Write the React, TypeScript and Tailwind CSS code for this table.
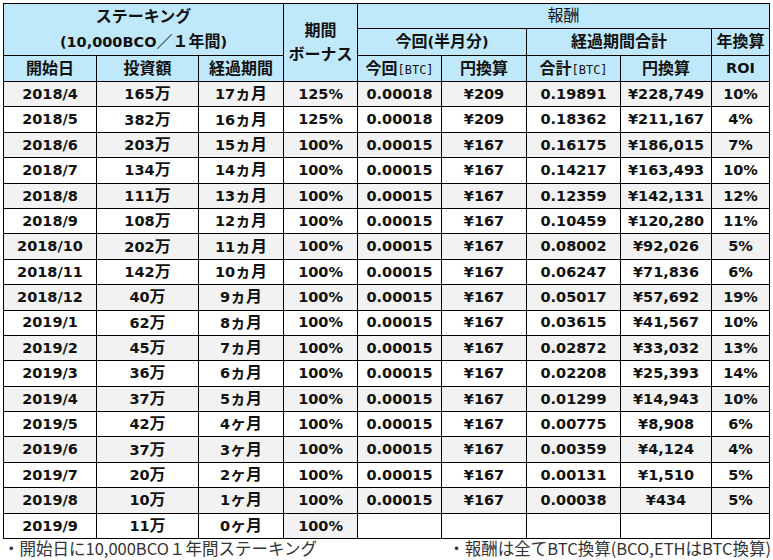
import React from "react"

const rows: string[][] = [
  ["2018/4", "165万", "17ヵ月", "125%", "0.00018", "¥209", "0.19891", "¥228,749", "10%"],
  ["2018/5", "382万", "16ヵ月", "125%", "0.00018", "¥209", "0.18362", "¥211,167", "4%"],
  ["2018/6", "203万", "15ヵ月", "100%", "0.00015", "¥167", "0.16175", "¥186,015", "7%"],
  ["2018/7", "134万", "14ヵ月", "100%", "0.00015", "¥167", "0.14217", "¥163,493", "10%"],
  ["2018/8", "111万", "13ヵ月", "100%", "0.00015", "¥167", "0.12359", "¥142,131", "12%"],
  ["2018/9", "108万", "12ヵ月", "100%", "0.00015", "¥167", "0.10459", "¥120,280", "11%"],
  ["2018/10", "202万", "11ヵ月", "100%", "0.00015", "¥167", "0.08002", "¥92,026", "5%"],
  ["2018/11", "142万", "10ヵ月", "100%", "0.00015", "¥167", "0.06247", "¥71,836", "6%"],
  ["2018/12", "40万", "9ヵ月", "100%", "0.00015", "¥167", "0.05017", "¥57,692", "19%"],
  ["2019/1", "62万", "8ヵ月", "100%", "0.00015", "¥167", "0.03615", "¥41,567", "10%"],
  ["2019/2", "45万", "7ヵ月", "100%", "0.00015", "¥167", "0.02872", "¥33,032", "13%"],
  ["2019/3", "36万", "6ヵ月", "100%", "0.00015", "¥167", "0.02208", "¥25,393", "14%"],
  ["2019/4", "37万", "5ヵ月", "100%", "0.00015", "¥167", "0.01299", "¥14,943", "10%"],
  ["2019/5", "42万", "4ヶ月", "100%", "0.00015", "¥167", "0.00775", "¥8,908", "6%"],
  ["2019/6", "37万", "3ヶ月", "100%", "0.00015", "¥167", "0.00359", "¥4,124", "4%"],
  ["2019/7", "20万", "2ヶ月", "100%", "0.00015", "¥167", "0.00131", "¥1,510", "5%"],
  ["2019/8", "10万", "1ヶ月", "100%", "0.00015", "¥167", "0.00038", "¥434", "5%"],
  ["2019/9", "11万", "0ヶ月", "100%", "", "", "", "", ""],
]

const widths = [93, 102, 85, 74, 84, 85, 94, 91, 58]

const th = "border border-black bg-[#bfe9fb] p-0 text-center align-middle font-bold"
const btc = "font-['DejaVu_Sans_Mono','Liberation_Mono',monospace] text-[12px] font-normal"

// Japanese glyphs sit a little larger than the Latin digits
function Jp({ text }: { text: string }) {
  const parts = text.split(/([\u3000-\u9fff\uff00-\uffef]+)/)
  return (
    <>
      {parts.map((p, i) =>
        i % 2 === 1 ? (
          <span key={i} className="text-[16px]">
            {p}
          </span>
        ) : (
          p
        )
      )}
    </>
  )
}

export default function App() {
  return (
    <div className="w-[773px] h-[560px] bg-white pl-[3px] pt-[3px] font-['DejaVu_Sans','Noto_Sans_CJK_JP',sans-serif] text-[#111]">
      <table className="w-[766px] table-fixed border-collapse text-[14.5px] leading-none">
        <colgroup>
          {widths.map((w, i) => (
            <col key={i} style={{ width: w }} />
          ))}
        </colgroup>
        <thead>
          <tr className="h-[25px]">
            <th colSpan={3} rowSpan={2} className={th}>
              <div className="flex h-[25px] items-center justify-center">
                <Jp text="ステーキング" />
              </div>
              <div className="flex h-[26px] items-center justify-center">
                <Jp text="(10,000BCO／１年間)" />
              </div>
            </th>
            <th rowSpan={3} className={th}>
              <div className="leading-[23px]">
                <Jp text="期間" />
              </div>
              <div className="leading-[23px]">
                <Jp text="ボーナス" />
              </div>
            </th>
            <th colSpan={5} className={`${th} font-normal`}>
              <Jp text="報酬" />
            </th>
          </tr>
          <tr className="h-[26px]">
            <th colSpan={2} className={th}>
              <Jp text="今回(半月分)" />
            </th>
            <th colSpan={2} className={th}>
              <Jp text="経過期間合計" />
            </th>
            <th className={th}>
              <Jp text="年換算" />
            </th>
          </tr>
          <tr className="h-[26px]">
            <th className={th}>
              <Jp text="開始日" />
            </th>
            <th className={th}>
              <Jp text="投資額" />
            </th>
            <th className={th}>
              <Jp text="経過期間" />
            </th>
            <th className={th}>
              <Jp text="今回" />
              <span className={btc}>[BTC]</span>
            </th>
            <th className={th}>
              <Jp text="円換算" />
            </th>
            <th className={th}>
              <Jp text="合計" />
              <span className={btc}>[BTC]</span>
            </th>
            <th className={th}>
              <Jp text="円換算" />
            </th>
            <th className={th}>ROI</th>
          </tr>
        </thead>
        <tbody>
          {rows.map((r, i) => {
            const last = i === rows.length - 1
            return (
              <tr key={r[0]} className={`h-[25.4px] ${i % 2 === 0 ? "bg-[#f2f2f2]" : "bg-white"}`}>
                {r.map((c, j) => (
                  <td
                    key={j}
                    className={`border border-black p-0 text-center align-middle font-bold ${
                      last && j === 3 ? "bg-[#f2f2f2]" : ""
                    }`}
                  >
                    <Jp text={c} />
                  </td>
                ))}
              </tr>
            )
          })}
        </tbody>
      </table>
      <div className="flex w-[768px] justify-between font-['Noto_Sans_CJK_JP',sans-serif] text-[16.5px] leading-[18px] text-[#333]">
        <span>・開始日に10,000BCO１年間ステーキング</span>
        <span>・報酬は全てBTC換算(BCO,ETHはBTC換算)</span>
      </div>
    </div>
  )
}
